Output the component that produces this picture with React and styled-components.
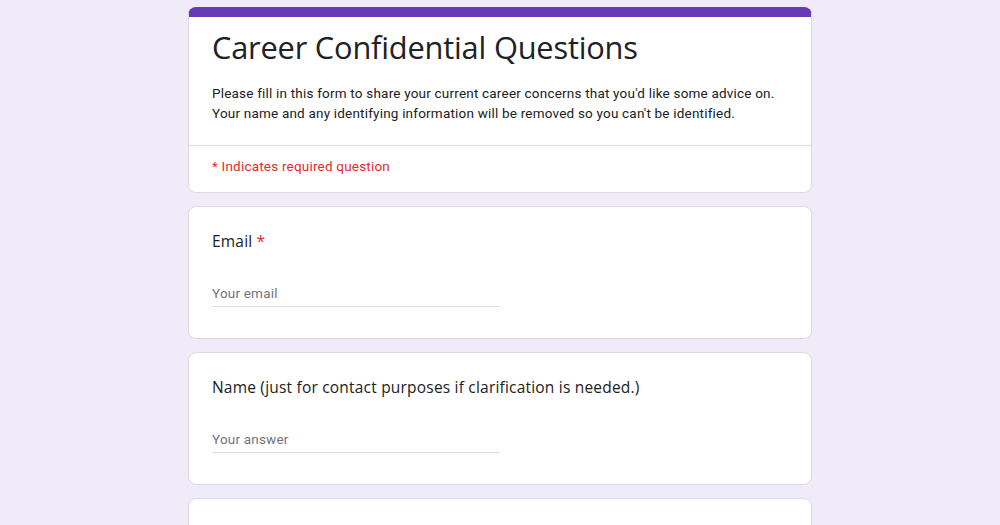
import React from "react";
import styled, { createGlobalStyle } from "styled-components";

const GlobalStyle = createGlobalStyle`
  html, body {
    margin: 0;
    padding: 0;
    background: #f0ebf8;
  }
  body {
    font-family: Roboto, "Liberation Sans", Arial, sans-serif;
    color: #202124;
  }
`;

const Page = styled.div`
  display: flex;
  flex-direction: column;
  align-items: center;
  gap: 13px;
  padding-top: 7px;
  min-height: 525px;
  box-sizing: border-box;
`;

const Card = styled.div`
  width: 624px;
  background: #fff;
  border: 1px solid #dadce0;
  border-radius: 8px;
  box-sizing: border-box;
  overflow: hidden;
`;

const HeaderCard = styled(Card)`
  border-top: 10px solid #673ab7;
`;

const HeaderBody = styled.div`
  padding: 10px 24px 22px 23px;
`;

const Title = styled.h1`
  margin: 0;
  font-family: "Open Sans", Inter, sans-serif;
  font-weight: 400;
  font-size: 30.8px;
  line-height: 40px;
  letter-spacing: -0.2px;
  color: #202124;
`;

const Description = styled.p`
  margin: 16px 0 0;
  font-size: 13.5px;
  line-height: 20px;
  color: #202124;
  letter-spacing: 0.2px;
`;

const Divider = styled.div`
  height: 1px;
  background: #dadce0;
`;

const Required = styled.div`
  padding: 10px 24px 16px 23px;
  font-size: 13.5px;
  line-height: 20px;
  color: #d93025;
  letter-spacing: 0.2px;
`;

const QuestionCard = styled(Card)`
  height: 133px;
  padding: 22px 24px 0 23px;
`;

const Label = styled.div`
  font-family: "Open Sans", Inter, sans-serif;
  font-size: 15.5px;
  line-height: 24px;
  color: #202124;
  letter-spacing: 0.2px;
`;

const Star = styled.span`
  color: #d93025;
  margin-left: 4px;
`;

const Field = styled.div`
  margin-top: 30px;
  width: 288px;
  border-bottom: 1px solid #dadce0;
  padding-bottom: 3px;
  font-size: 13.5px;
  line-height: 20px;
  color: #70757a;
  letter-spacing: 0.2px;
`;

const Question = ({ label, required, placeholder }) => (
  <QuestionCard>
    <Label>
      {label}
      {required && <Star>*</Star>}
    </Label>
    <Field>{placeholder}</Field>
  </QuestionCard>
);

export default function App() {
  return (
    <>
      <GlobalStyle />
      <Page>
        <HeaderCard>
          <HeaderBody>
            <Title>Career Confidential Questions</Title>
            <Description>
              Please fill in this form to share your current career concerns that you'd like some advice on.
              <br />
              Your name and any identifying information will be removed so you can't be identified.
            </Description>
          </HeaderBody>
          <Divider />
          <Required>* Indicates required question</Required>
        </HeaderCard>
        <Question label="Email" required placeholder="Your email" />
        <Question
          label="Name (just for contact purposes if clarification is needed.)"
          placeholder="Your answer"
        />
        <QuestionCard />
      </Page>
    </>
  );
}
